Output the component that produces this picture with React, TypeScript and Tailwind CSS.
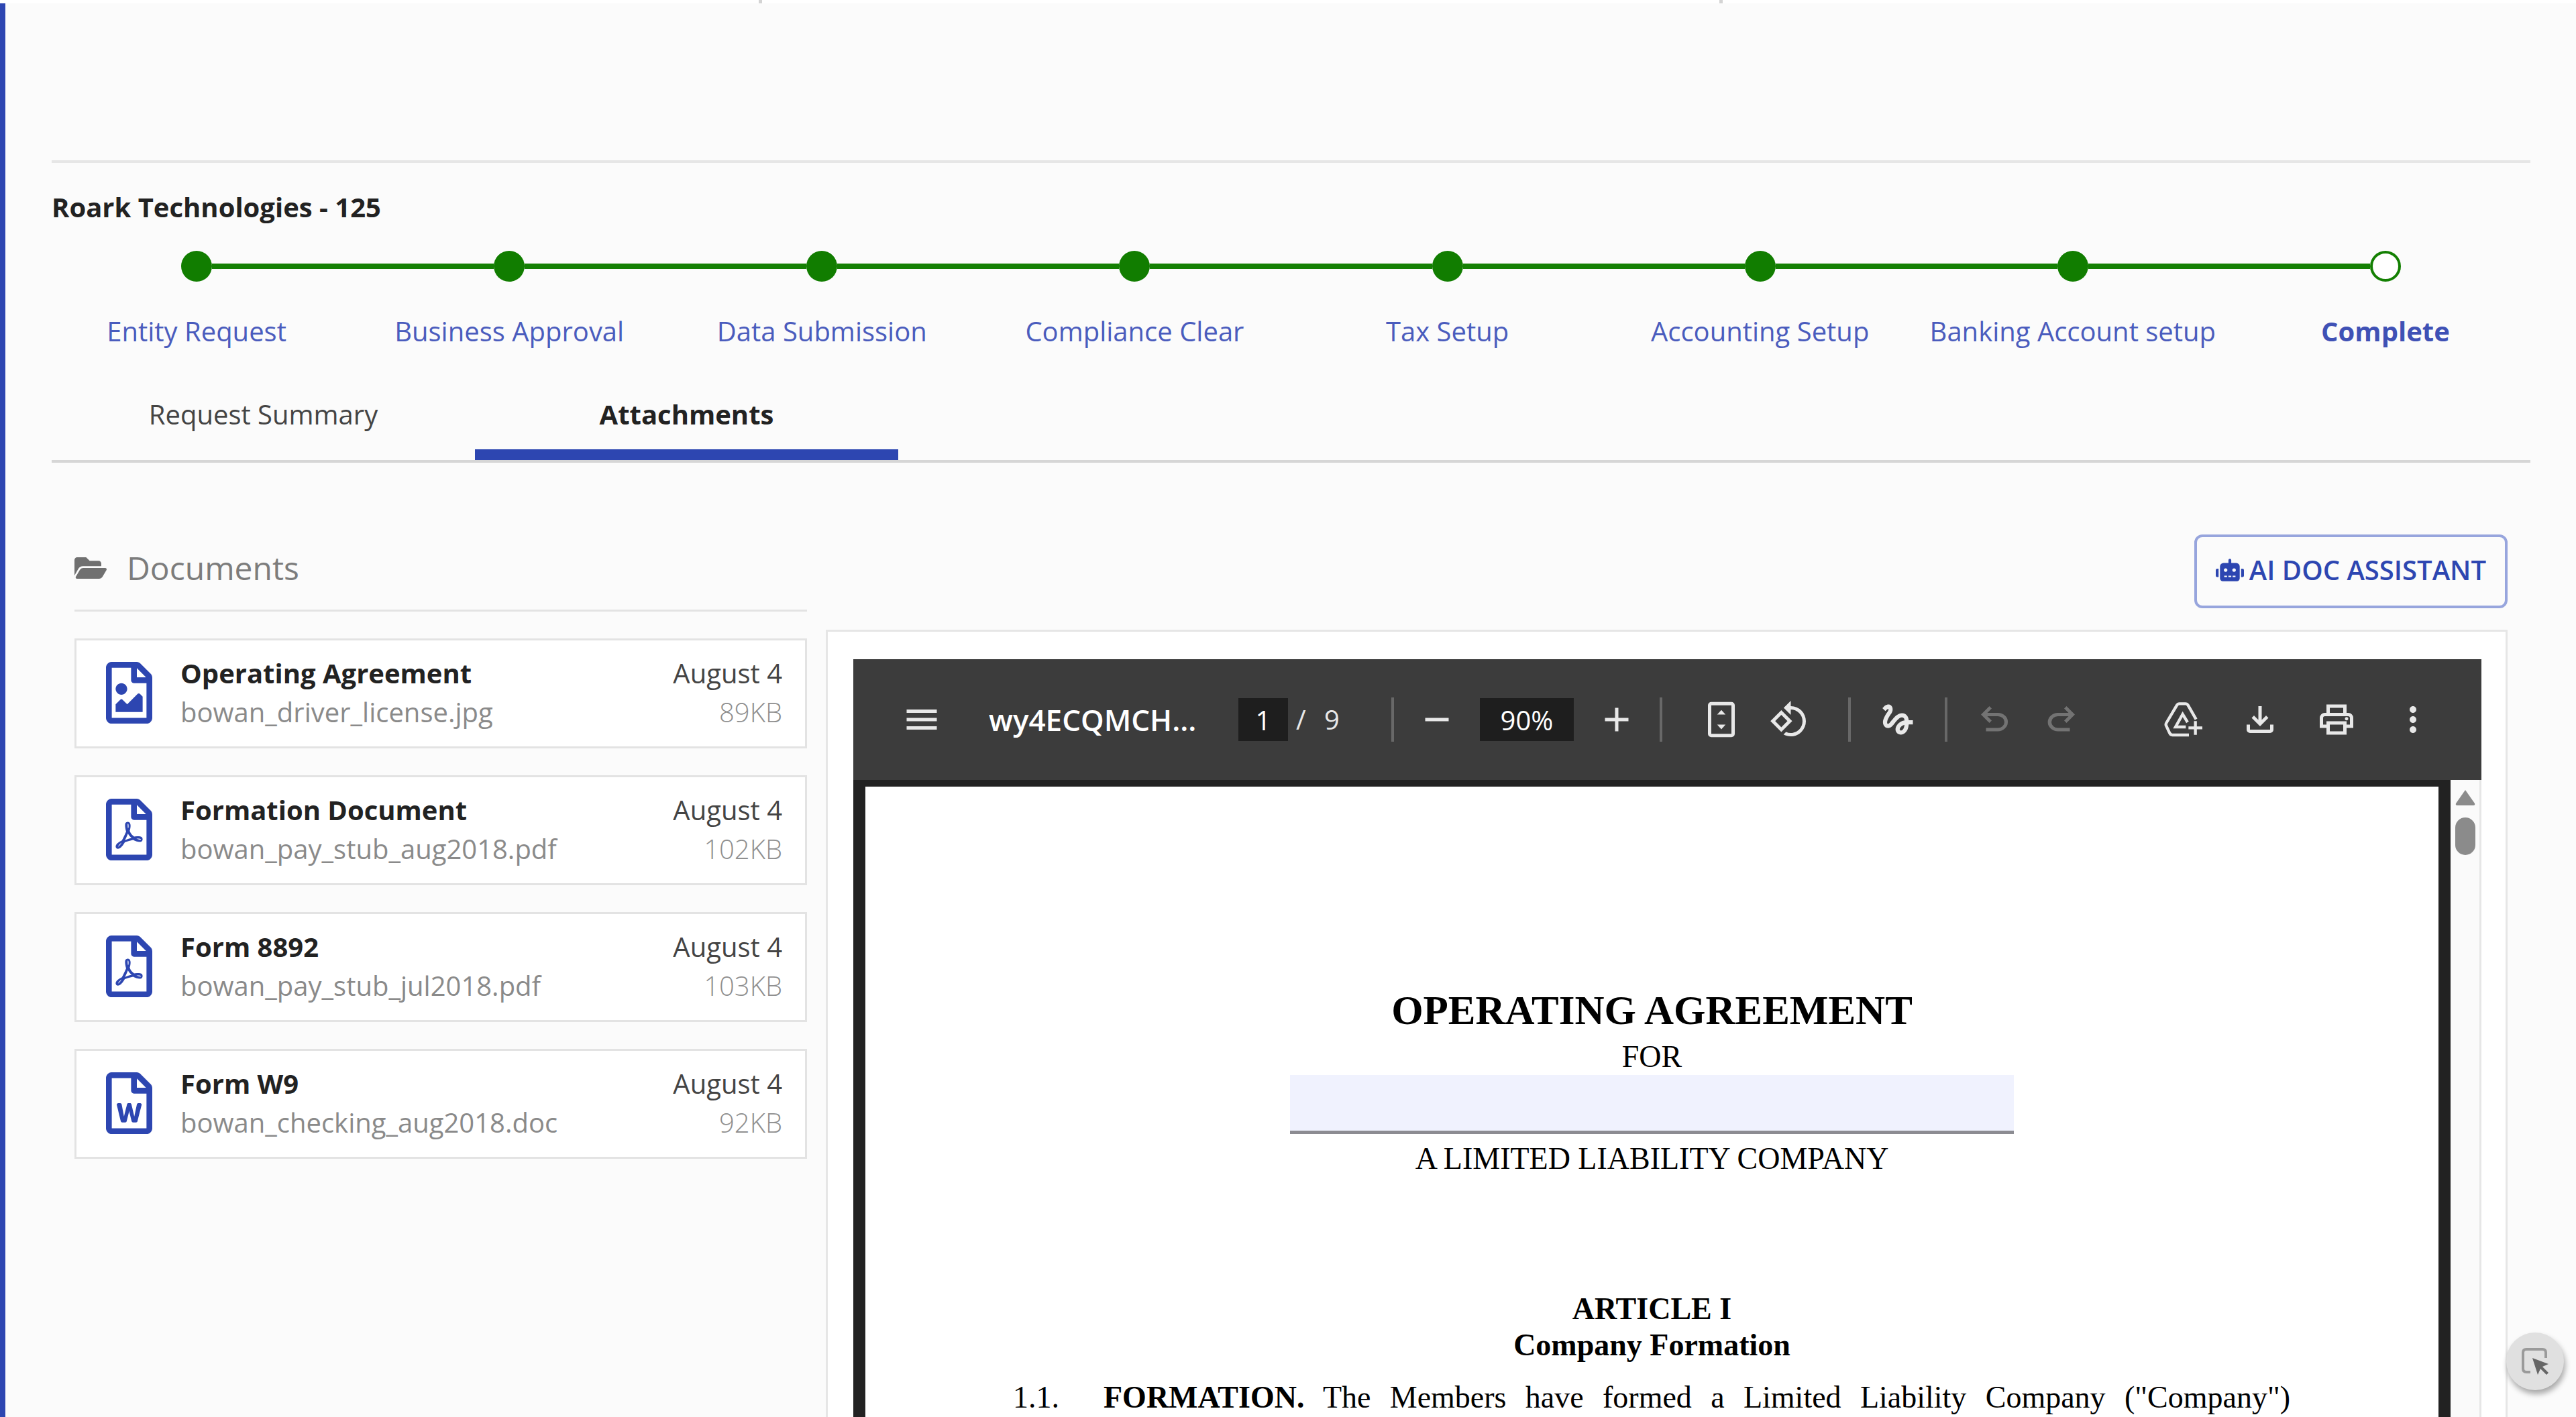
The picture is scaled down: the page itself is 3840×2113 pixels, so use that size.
import type { ReactNode } from "react";
import { FaFolderOpen, FaRegFileImage, FaRegFilePdf, FaRegFileWord, FaRobot } from "react-icons/fa";
import { MdAdd, MdGesture, MdMenu, MdMoreVert, MdRemove, MdRotate90DegreesCcw } from "react-icons/md";

const steps = [
  "Entity Request",
  "Business Approval",
  "Data Submission",
  "Compliance Clear",
  "Tax Setup",
  "Accounting Setup",
  "Banking Account setup",
  "Complete",
];

const documents = [
  { title: "Operating Agreement", file: "bowan_driver_license.jpg", date: "August 4", size: "89KB", Icon: FaRegFileImage },
  { title: "Formation Document", file: "bowan_pay_stub_aug2018.pdf", date: "August 4", size: "102KB", Icon: FaRegFilePdf },
  { title: "Form 8892", file: "bowan_pay_stub_jul2018.pdf", date: "August 4", size: "103KB", Icon: FaRegFilePdf },
  { title: "Form W9", file: "bowan_checking_aug2018.doc", date: "August 4", size: "92KB", Icon: FaRegFileWord },
];

const symbols = {
  undo: "M280-200v-80h284q63 0 109.5-40T720-420q0-60-46.5-100T564-560H312l104 104-56 56-200-200 200-200 56 56-104 104h252q97 0 169.5 63T800-420q0 94-72.5 157T564-200H280Z",
  redo: "M396-200q-97 0-169.5-63T154-420q0-94 72.5-157T396-640h252L544-744l56-56 200 200-200 200-56-56 104-104H396q-63 0-109.5 40T240-420q0 60 46.5 100T396-280h284v80H396Z",
  download:
    "M480-320 280-520l56-58 104 104v-326h80v326l104-104 56 58-200 200ZM240-160q-33 0-56.5-23.5T160-240v-120h80v120h480v-120h80v120q0 33-23.5 56.5T720-160H240Z",
  print:
    "M640-640v-120H320v120h-80v-200h480v200h-80Zm80 180q17 0 28.5-11.5T760-500q0-17-11.5-28.5T720-540q-17 0-28.5 11.5T680-500q0 17 11.5 28.5T720-460Zm-80 260v-160H320v160h320Zm80 80H240v-160H80v-240q0-51 35-85.5t85-34.5h560q51 0 85.5 34.5T880-520v240H720v160Zm80-240v-160q0-17-11.5-28.5T760-560H200q-17 0-28.5 11.5T160-520v160h80v-80h480v80h80Z",
  fit: "M240-60q-33 0-56.500-23.500T160-140v-680q0-33 23.500-56.500T240-900h480q33 0 56.500 23.500T800-820v680q0 33-23.500 56.500T720-60H240Zm0-80h480v-680H240v680Zm140-460h200L480-710 380-600Zm100 350 100-110H380l100 110Z",
};

function Symbol({ name }: { name: keyof typeof symbols }) {
  return (
    <svg viewBox="0 -960 960 960" className="size-full" fill="currentColor" aria-hidden="true">
      <path d={symbols[name]} />
    </svg>
  );
}

function DriveAddIcon() {
  return (
    <svg viewBox="15 66 180 180" className="size-full" fill="none" stroke="currentColor" strokeWidth="13" aria-hidden="true">
      <path d="M161 155 125 92q-4-7-12-7H87q-8 0-12 7L28 171q-4 7 0 14l15 32q4 8 12 8h74" />
      <path d="m123 168-22-36-32 57h46" />
      <path d="M158 163v61M127 193h62" />
    </svg>
  );
}

function ToolButton({ label, disabled, children }: { label: string; disabled?: boolean; children: ReactNode }) {
  return (
    <button type="button" aria-label={label} disabled={disabled} className="size-[60px] shrink-0 text-[#e8e8e8] disabled:text-[#737373]">
      {children}
    </button>
  );
}

function Divider() {
  return <span className="h-[66px] w-[4px] shrink-0 bg-[#686868]" />;
}

function Stepper() {
  return (
    <ol className="-mx-[17px] mt-[35px] grid grid-cols-8">
      {steps.map((step, i) => {
        const current = i === steps.length - 1;
        return (
          <li key={step} className="flex flex-col items-center gap-[46px]">
            <div className="flex w-full items-center">
              <span className={i === 0 ? "h-[8px] flex-1" : "h-[8px] flex-1 bg-[#148003]"} />
              <span
                className={
                  current
                    ? "size-[46px] rounded-full border-[4px] border-[#148003] bg-white"
                    : "size-[46px] rounded-full bg-[#117d00]"
                }
              />
              <span className={current ? "h-[8px] flex-1" : "h-[8px] flex-1 bg-[#148003]"} />
            </div>
            <a
              href="#"
              aria-current={current ? "step" : undefined}
              className={
                current
                  ? "text-[40px] leading-[56px] font-bold whitespace-nowrap text-[#3f51b5]"
                  : "text-[40px] leading-[56px] whitespace-nowrap text-[#4a5cbd]"
              }
            >
              {step}
            </a>
          </li>
        );
      })}
    </ol>
  );
}

function Tabs() {
  return (
    <div role="tablist" className="mt-[48px] flex border-b-[4px] border-[#d6d6d6]">
      <button type="button" role="tab" aria-selected="false" className="h-[116px] w-[631px] pb-[20px] text-[40px] text-[#444]">
        Request Summary
      </button>
      <button
        type="button"
        role="tab"
        aria-selected="true"
        className="h-[116px] w-[631px] border-b-[16px] border-[#2d46b1] pb-[4px] text-[40px] font-bold text-[#222]"
      >
        Attachments
      </button>
    </div>
  );
}

function DocumentList() {
  return (
    <section className="pt-[14px]">
      <h2 className="flex items-center gap-[30px] border-b-[3px] border-[#e3e3e3] pb-[26px] text-[48px] leading-[72px] text-[#7c7c7c]">
        <FaFolderOpen className="size-[48px] text-[#707070]" />
        Documents
      </h2>
      <ul className="mt-[40px] flex flex-col gap-[40px]">
        {documents.map(({ title, file, date, size, Icon }) => (
          <li key={title}>
            <button
              type="button"
              className="flex h-[164px] w-full items-center gap-[42px] border-[3px] border-[#e3e3e3] bg-white pr-[34px] pb-[2px] pl-[44px] text-left text-[40px] leading-[58px]"
            >
              <Icon className="h-[92px] w-[69px] shrink-0 text-[#2d46b1]" />
              <span className="flex-1">
                <span className="block font-bold text-[#222]">{title}</span>
                <span className="block text-[#8a8a8a]">{file}</span>
              </span>
              <span className="text-right">
                <span className="block text-[#444]">{date}</span>
                <span className="block font-light text-[#8f8f8f]">{size}</span>
              </span>
            </button>
          </li>
        ))}
      </ul>
    </section>
  );
}

function Toolbar() {
  return (
    <div className="flex h-[180px] shrink-0 items-center bg-[#3c3c3c] pr-[72px] pl-[72px] text-[40px] text-[#e8e8e8]">
      <ToolButton label="Menu">
        <MdMenu className="size-full" />
      </ToolButton>
      <span className="ml-[70px] w-[310px] text-[44px] font-semibold whitespace-nowrap text-white">wy4ECQMCH...</span>
      <input
        aria-label="Page number"
        defaultValue="1"
        className="ml-[62px] h-[64px] w-[74px] bg-[#1e1e1e] text-center text-white"
      />
      <span className="ml-[12px] w-[18px]">/</span>
      <span className="ml-[24px] w-[24px]">9</span>
      <div className="ml-[76px] flex items-center gap-[34px]">
        <Divider />
        <ToolButton label="Zoom out">
          <MdRemove className="size-full" />
        </ToolButton>
        <input
          aria-label="Zoom level"
          defaultValue="90%"
          className="h-[64px] w-[140px] bg-[#1e1e1e] text-center text-white"
        />
        <ToolButton label="Zoom in">
          <MdAdd className="size-full" />
        </ToolButton>
        <Divider />
      </div>
      <div className="ml-[58px] flex items-center gap-[41px]">
        <ToolButton label="Fit to page">
          <Symbol name="fit" />
        </ToolButton>
        <ToolButton label="Rotate counterclockwise">
          <MdRotate90DegreesCcw className="size-full" />
        </ToolButton>
      </div>
      <div className="ml-[58px] flex items-center gap-[40px]">
        <Divider />
        <ToolButton label="Draw">
          <MdGesture className="size-full" />
        </ToolButton>
        <Divider />
        <ToolButton label="Undo" disabled>
          <Symbol name="undo" />
        </ToolButton>
        <ToolButton label="Redo" disabled>
          <Symbol name="redo" />
        </ToolButton>
      </div>
      <div className="ml-auto flex items-center gap-[54px]">
        <ToolButton label="Save to Drive">
          <DriveAddIcon />
        </ToolButton>
        <ToolButton label="Download">
          <Symbol name="download" />
        </ToolButton>
        <ToolButton label="Print">
          <Symbol name="print" />
        </ToolButton>
        <ToolButton label="More actions">
          <MdMoreVert className="size-full" />
        </ToolButton>
      </div>
    </div>
  );
}

function AgreementPage() {
  return (
    <article className="mx-[18px] mt-[10px] flex min-w-0 flex-1 flex-col items-center bg-white font-['Liberation_Serif',serif] text-[46px] leading-[54px] text-black">
      <h1 className="mt-[298px] text-[61px] leading-[72px] font-bold">OPERATING AGREEMENT</h1>
      <p className="mt-[6px]">
        <label htmlFor="company">FOR</label>
      </p>
      <input id="company" className="h-[88px] w-[46%] shrink-0 border-b-[5px] border-[#8c8c92] bg-[#f0f2fe]" />
      <p className="mt-[10px]">A LIMITED LIABILITY COMPANY</p>
      <h2 className="mt-[170px] text-center font-bold">
        ARTICLE I
        <br />
        Company Formation
      </h2>
      <div className="mt-[24px] flex w-full pr-[221px] pl-[220px]">
        <span className="w-[135px] shrink-0">1.1.</span>
        <p className="flex-1 text-justify [text-align-last:justify]">
          <b>FORMATION.</b> The Members have formed a Limited Liability Company ("Company")
        </p>
      </div>
    </article>
  );
}

function Viewer() {
  return (
    <div className="mt-[32px] flex min-h-0 flex-1 flex-col border-[3px] border-b-0 border-[#e6e6e6] bg-white pt-[41px] pr-[36px] pl-[38px]">
      <Toolbar />
      <div className="flex min-h-0 flex-1 overflow-hidden bg-[#222]">
        <AgreementPage />
        <div className="flex w-[46px] shrink-0 flex-col items-center gap-[18px] border-r-[3px] border-[#e6e6e6] bg-[#fafafa] pt-[14px]">
          <svg viewBox="0 0 30 24" className="h-[24px] w-[30px]" fill="#8b8b8b" aria-hidden="true">
            <path d="M15 1 29 21q1 3-2 3H3q-3 0-2-3Z" />
          </svg>
          <span className="h-[56px] w-[30px] rounded-full bg-[#8b8b8b]" />
        </div>
      </div>
    </div>
  );
}

export default function App() {
  return (
    <div className="flex h-screen flex-col overflow-hidden bg-[#fbfbfb] font-['Open_Sans','Noto_Sans',sans-serif]">
      <div className="grid h-[5px] shrink-0 grid-cols-[1136px_1432px_1fr] bg-white">
        <span className="border-r-[5px] border-[#d4d4d4]" />
        <span className="border-r-[5px] border-[#d4d4d4]" />
      </div>
      <main className="flex min-h-0 flex-1 flex-col border-l-[8px] border-[#2d46b1] pr-[68px] pl-[69px]">
        <h1 className="mt-[234px] border-t-[4px] border-[#e6e6e6] pt-[38px] pb-[2px] text-[40px] leading-[56px] font-bold text-[#222]">
          Roark Technologies - 125
        </h1>
        <Stepper />
        <Tabs />
        <div className="grid min-h-0 flex-1 grid-cols-[1092px_minmax(0,1fr)] gap-[28px] pt-[107px] pr-[34px] pl-[34px]">
          <DocumentList />
          <section className="flex min-h-0 flex-col">
            <button
              type="button"
              className="flex h-[110px] items-center gap-[8px] self-end rounded-[12px] border-[4px] border-[#97a5dd] px-[28px] pb-[4px] text-[40px] font-semibold text-[#2d46b1]"
            >
              <FaRobot className="size-[42px]" />
              AI DOC ASSISTANT
            </button>
            <Viewer />
          </section>
        </div>
      </main>
      <button
        type="button"
        aria-label="Select element"
        className="fixed right-[18px] bottom-[40px] flex size-[86px] items-center justify-center rounded-full bg-[#e0e0e0] shadow-[2px_6px_8px_#00000055]"
      >
        <svg viewBox="0 0 42 42" className="size-[42px]" fill="none" aria-hidden="true">
          <path d="M14 37H8q-5 0-5-5V8q0-5 5-5h24q5 0 5 5v8" stroke="#9a9a9a" strokeWidth="4" />
          <path d="m17 16 24 9-9 4 9 9-3 3-9-9-4 9Z" fill="#666" />
        </svg>
      </button>
    </div>
  );
}
